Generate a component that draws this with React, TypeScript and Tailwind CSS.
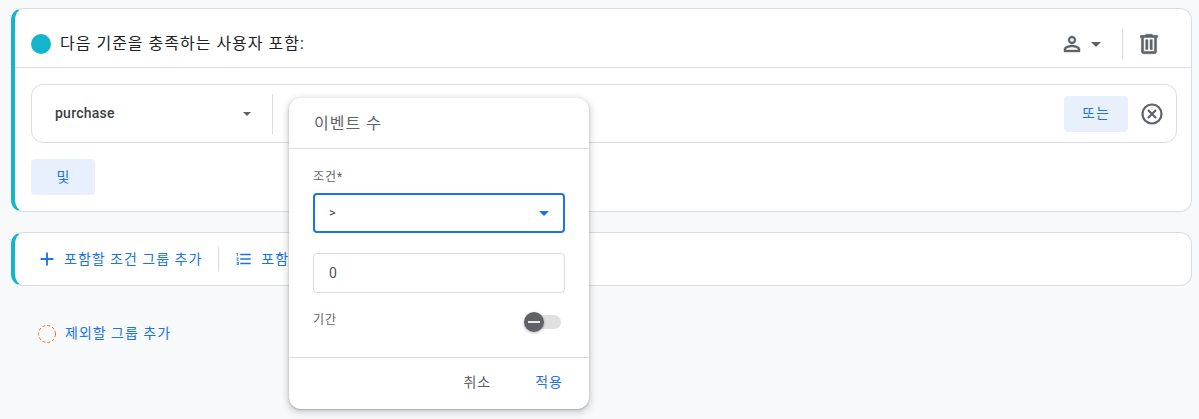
const font = "font-['Roboto','Noto_Sans_CJK_KR',sans-serif]";

function Caret({ className }: { className: string }) {
  return (
    <svg viewBox="0 0 10 5" className={className} fill="currentColor">
      <path d="M0 0h10L5 5z" />
    </svg>
  );
}

function PersonIcon() {
  return (
    <svg viewBox="0 0 24 24" className="w-6 h-6 text-[#5f6368]" fill="currentColor">
      <path d="M12 6c1.1 0 2 .9 2 2s-.9 2-2 2-2-.9-2-2 .9-2 2-2m0 9c2.7 0 5.8 1.29 6 2v1H6v-.99c.2-.72 3.3-2.01 6-2.01m0-11C9.79 4 8 5.79 8 8s1.79 4 4 4 4-1.79 4-4-1.79-4-4-4zm0 9c-2.67 0-8 1.34-8 4v3h16v-3c0-2.66-5.33-4-8-4z" stroke="currentColor" strokeWidth="0.4" />
    </svg>
  );
}

function TrashIcon() {
  return (
    <svg viewBox="0 0 24 24" className="w-[26px] h-[26px] text-[#5f6368]" fill="currentColor">
      <path d="M15 4V3H9v1H4v2h1v13c0 1.1.9 2 2 2h10c1.1 0 2-.9 2-2V6h1V4h-5zm2 15H7V6h10v13zM9 8h2v9H9zm4 0h2v9h-2z" stroke="currentColor" strokeWidth="0.5" />
    </svg>
  );
}

function CancelIcon() {
  return (
    <svg viewBox="0 0 24 24" className="w-6 h-6 text-[#5f6368]" fill="none" stroke="currentColor" strokeWidth="2.2">
      <circle cx="12" cy="12" r="9.5" />
      <path d="M8 8l8 8M16 8l-8 8" />
    </svg>
  );
}

function NumberedListIcon() {
  return (
    <svg viewBox="0 0 24 24" className="w-[18px] h-[18px]" fill="currentColor">
      <path d="M2 17h2v.5H3v1h1v.5H2v1h3v-4H2v1zm1-9h1V4H2v1h1v3zm-1 3h1.8L2 13.1v.9h3v-1H3.2L5 10.9V10H2v1zm5-6v2h14V5H7zm0 14h14v-2H7v2zm0-6h14v-2H7v2z" />
    </svg>
  );
}

function PlusIcon() {
  return (
    <svg viewBox="0 0 24 24" className="w-[22px] h-[22px]" fill="currentColor">
      <path d="M19 13h-6v6h-2v-6H5v-2h6V5h2v6h6v2z" />
    </svg>
  );
}

function DashedCircle() {
  return (
    <svg viewBox="0 0 18 18" className="w-[18px] h-[18px]" fill="none" stroke="#e8710a" strokeWidth="1" strokeDasharray="3 2">
      <circle cx="9" cy="9" r="8.5" />
    </svg>
  );
}

function Popup() {
  return (
    <div className="absolute left-[289px] top-[98px] w-[300px] h-[311px] bg-white rounded-xl shadow-[0_2px_6px_2px_rgba(60,64,67,0.2),0_1px_2px_rgba(60,64,67,0.3)] flex flex-col">
      <div className="h-[51px] shrink-0 border-b border-[#dadce0] pl-[25px] pt-[1px] flex items-center text-[16px] tracking-[1px] text-[#5f6368]">
        이벤트 수
      </div>
      <div className="flex-1 px-6 pt-5">
        <div className="text-[12px] leading-[16px] tracking-[1px] text-[#5f6368]">조건*</div>
        <div className="mt-2 h-10 border-2 border-[#1a73e8] rounded-[4px] pl-[14px] pr-[14px] flex items-center justify-between text-[13px] text-[#3c4043]">
          <span>&gt;</span>
          <Caret className="w-[10px] h-[5px] text-[#1a73e8]" />
        </div>
        <div className="mt-5 h-10 border border-[#dadce0] rounded-[4px] pl-[15px] flex items-center text-[14px] text-[#4d5156]">
          0
        </div>
        <div className="mt-[18px] flex items-start justify-between pr-[4px]">
          <span className="text-[12px] leading-[18px] tracking-[1px] text-[#5f6368]">기간</span>
          <div className="relative mt-[4px] w-[36px] h-[14px] rounded-full bg-[#e0e0e0]">
            <div className="absolute -left-[1px] -top-[3px] w-5 h-5 rounded-full bg-[#5f6368] shadow-[0_1px_3px_rgba(0,0,0,0.3)] flex items-center justify-center">
              <div className="w-3 h-[2px] bg-[#e8eaed]" />
            </div>
          </div>
        </div>
      </div>
      <div className="h-[52px] shrink-0 border-t border-[#dadce0] pb-[2px] flex items-center justify-end gap-[44px] pr-[26px] text-[14px] tracking-[1px]">
        <span className="text-[#5f6368]">취소</span>
        <span className="text-[#1a73e8]">적용</span>
      </div>
    </div>
  );
}

export default function App() {
  return (
    <div className={`relative h-[419px] overflow-hidden bg-[#f8f9fa] ${font} pl-[11px] pr-[7px] pt-2`}>
      <div className="h-[204px] bg-white border border-[#dadce0] border-l-4 border-l-[#12b5cb] rounded-xl">
        <div className="h-[59px] border-b border-[#dadce0] pl-4 pt-3 flex items-center">
          <div className="w-5 h-5 rounded-full bg-[#12b5cb]" />
          <span className="ml-[9px] text-[16px] tracking-[1px] text-[#202124]">다음 기준을 충족하는 사용자 포함:</span>
          <div className="ml-auto flex items-center pr-[29px]">
            <PersonIcon />
            <Caret className="ml-[7px] w-[10px] h-[5px] text-[#5f6368]" />
            <div className="ml-[21px] w-px h-[30px] bg-[#dadce0]" />
            <div className="ml-[13px]"><TrashIcon /></div>
          </div>
        </div>
        <div className="pl-4 pr-[14px] pt-4">
          <div className="h-[59px] border border-[#dadce0] rounded-xl flex items-center">
            <span className="ml-[23px] text-[14px] font-medium tracking-[0.25px] text-[#3c4043]">purchase</span>
            <Caret className="ml-[128px] w-2 h-1 text-[#5f6368]" />
            <div className="ml-[21px] w-px h-10 bg-[#dadce0]" />
            <div className="ml-auto w-16 h-9 rounded-[4px] bg-[#e8f0fe] flex items-center justify-center text-[14px] tracking-[1px] text-[#1a73e8]">
              또는
            </div>
            <div className="ml-[12px] mr-[12px]"><CancelIcon /></div>
          </div>
          <div className="mt-4 w-16 h-9 rounded-[4px] bg-[#e8f0fe] flex items-center justify-center text-[14px] text-[#1a73e8]">
            및
          </div>
        </div>
      </div>

      <div className="mt-5 h-[54px] bg-white border border-[#dadce0] border-l-4 border-l-[#12b5cb] rounded-xl flex items-center pl-[21px] text-[14px] tracking-[1px] text-[#1a73e8]">
        <PlusIcon />
        <span className="ml-[6px]">포함할 조건 그룹 추가</span>
        <div className="ml-4 w-px h-6 bg-[#dadce0]" />
        <div className="ml-4"><NumberedListIcon /></div>
        <span className="ml-2">포함할 순차 그룹 추가</span>
      </div>

      <div className="mt-[37px] ml-[27px] flex items-center text-[14px] tracking-[1px] text-[#1a73e8]">
        <DashedCircle />
        <span className="ml-[9px]">제외할 그룹 추가</span>
      </div>

      <Popup />
    </div>
  );
}
